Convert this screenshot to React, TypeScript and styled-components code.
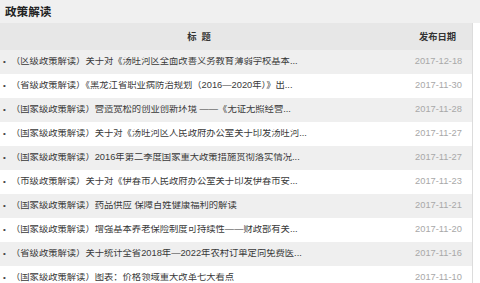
import React from "react";
import styled, { createGlobalStyle } from "styled-components";

const Global = createGlobalStyle`
  html, body { margin: 0; padding: 0; background: #ffffff; }
  body { font-family: "Liberation Sans", "Noto Sans CJK SC", sans-serif; }
`;

const Page = styled.div`
  width: 480px;
  height: 283px;
  overflow: hidden;
  background: #ffffff;
`;

const TitleBar = styled.div`
  height: 23px;
  background: #f0f0f0;
  display: flex;
  align-items: center;
  padding-left: 5px;
  font-size: 11.6px;
  font-weight: bold;
  color: #222;
  font-family: "Noto Sans CJK SC", sans-serif;
  line-height: 1;
`;

const Table = styled.div`
  width: 472px;
  border-right: 1px solid #dcdcdc;
`;

const Row = styled.div<{ $bg: string; $h: number }>`
  display: grid;
  grid-template-columns: 398px 74px;
  align-items: center;
  height: ${(p) => p.$h}px;
  background: ${(p) => p.$bg};
`;

const HeadCell = styled.div<{ $padLeft?: number }>`
  text-align: center;
  font-size: 9.3px;
  font-weight: bold;
  color: #333;
  font-family: "Noto Sans CJK SC", sans-serif;
  line-height: 1;
  padding-top: 1px;
  padding-left: ${(p) => p.$padLeft ?? 0}px;
  word-spacing: 3px;
  white-space: pre;
`;

const TitleCell = styled.div`
  display: flex;
  align-items: center;
  padding-left: 3px;
  font-size: 9.3px;
  color: #3a3a3a;
  line-height: 1;
  white-space: nowrap;
  overflow: hidden;
`;

const Bullet = styled.span`
  width: 8px;
  font-size: 8px;
  color: #444;
`;

const DateCell = styled.div`
  text-align: center;
  font-size: 9.3px;
  color: #a8a8a8;
  line-height: 1;
  padding-left: 7px;
`;

const rows: [string, string][] = [
  ["（区级政策解读）关于对《汤旺河区全面改善义务教育薄弱学校基本...", "2017-12-18"],
  ["（省级政策解读）《黑龙江省职业病防治规划（2016—2020年）》出...", "2017-11-30"],
  ["（国家级政策解读）营造宽松的创业创新环境 ——《无证无照经营...", "2017-11-28"],
  ["（国家级政策解读）关于对《汤旺河区人民政府办公室关于印发汤旺河...", "2017-11-27"],
  ["（国家级政策解读）2016年第二季度国家重大政策措施贯彻落实情况...", "2017-11-27"],
  ["（市级政策解读）关于对《伊春市人民政府办公室关于印发伊春市安...", "2017-11-23"],
  ["（国家级政策解读）药品供应 保障百姓健康福利的解读", "2017-11-21"],
  ["（国家级政策解读）增强基本养老保险制度可持续性——财政部有关...", "2017-11-20"],
  ["（省级政策解读）关于统计全省2018年—2022年农村订单定向免费医...", "2017-11-16"],
  ["（国家级政策解读）图表：价格领域重大改革七大看点", "2017-11-10"],
];

export default function App() {
  return (
    <Page>
      <Global />
      <TitleBar>政策解读</TitleBar>
      <Table>
        <Row $bg="#e7e7e7" $h={27}>
          <HeadCell>标 题</HeadCell>
          <HeadCell $padLeft={5}>发布日期</HeadCell>
        </Row>
        {rows.map(([t, d], i) => (
          <Row key={i} $bg={i % 2 === 0 ? "#efefef" : "#ffffff"} $h={24}>
            <TitleCell>
              <Bullet>•</Bullet>
              {t}
            </TitleCell>
            <DateCell>{d}</DateCell>
          </Row>
        ))}
      </Table>
    </Page>
  );
}
